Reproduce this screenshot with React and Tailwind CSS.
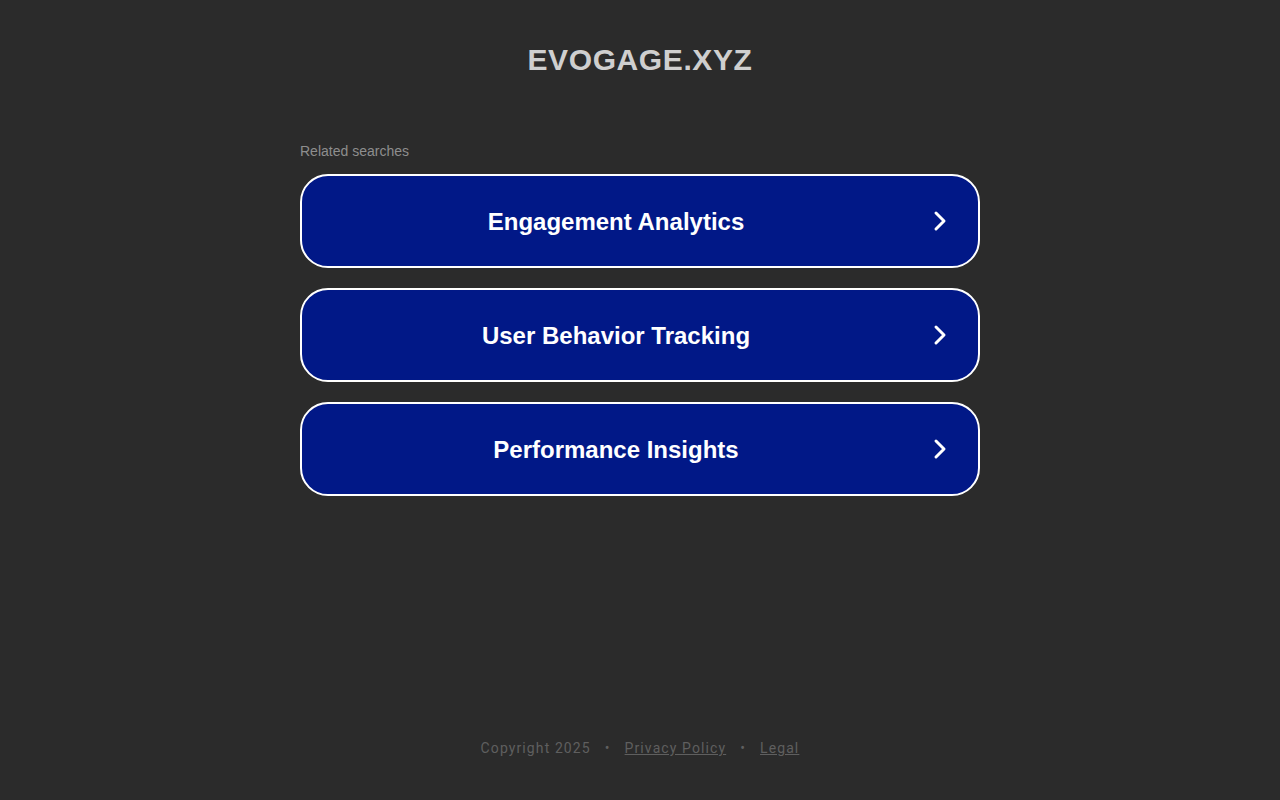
import React from 'react';

const items = ['Engagement Analytics', 'User Behavior Tracking', 'Performance Insights'];

const Chevron = () => (
  <svg width="20" height="24" viewBox="0 0 20 24" fill="none">
    <path d="M6 4l8 8-8 8" stroke="white" strokeWidth="3" strokeLinecap="round" strokeLinejoin="round" />
  </svg>
);

const App = () => {
  return (
    <div className="min-h-screen bg-[#2b2b2b] flex flex-col items-center font-['Liberation_Sans',Arial,sans-serif]">
      <h1 className="mt-[41px] text-[30px] leading-[38px] font-bold tracking-[0.6px] text-[#cfcfcf]">
        EVOGAGE.XYZ
      </h1>

      <div className="w-[680px] mt-[64px]">
        <p className="text-[14px] leading-[16px] text-[#8e8e8e] mb-[15px]">Related searches</p>
        <div className="flex flex-col gap-[20px]">
          {items.map((t) => (
            <a
              key={t}
              href="#"
              className="h-[94px] rounded-[28px] border-2 border-white bg-[#011887] flex items-center pl-0 pr-[28px]"
            >
              <span className="flex-1 text-center text-[24px] font-bold text-white pt-[2px]">{t}</span>
              <Chevron />
            </a>
          ))}
        </div>
      </div>

      <footer className="mt-auto mb-[41px] flex items-center gap-[14px] text-[14px] tracking-[1.1px] text-[#5f5f5f] font-['Roboto',sans-serif]">
        <span>Copyright 2025</span>
        <span>•</span>
        <a href="#" className="underline">Privacy Policy</a>
        <span>•</span>
        <a href="#" className="underline">Legal</a>
      </footer>
    </div>
  );
};

export default App;
